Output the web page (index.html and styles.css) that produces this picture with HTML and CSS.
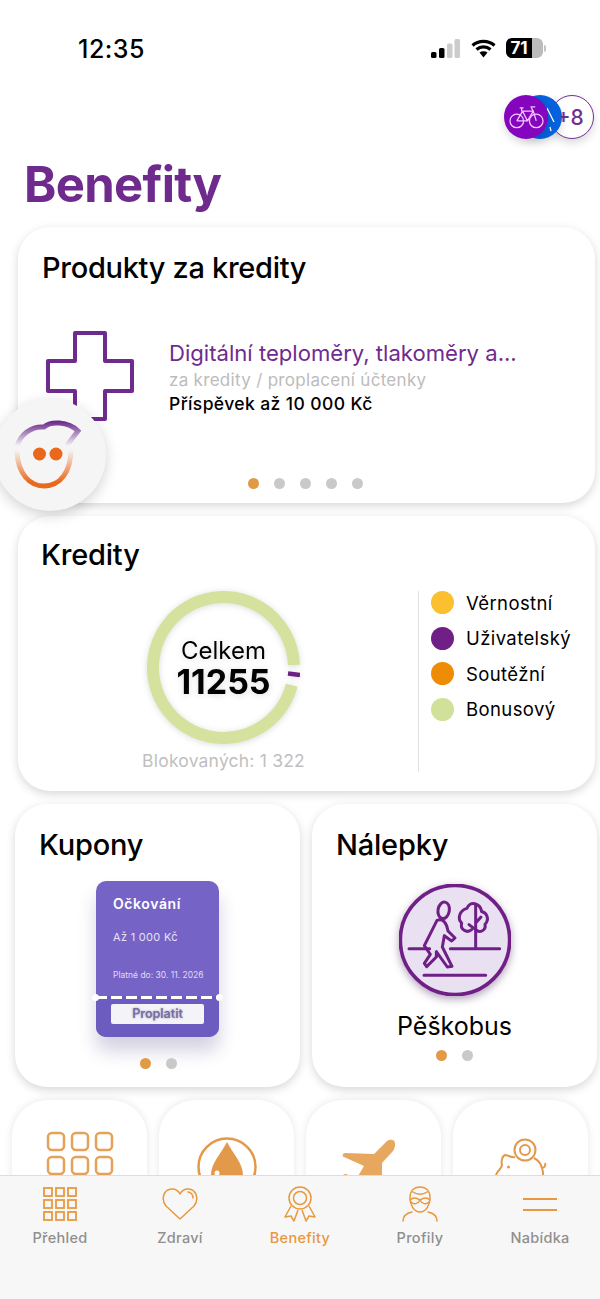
FILE: index.html
```html
<!DOCTYPE html>
<html>

<head>
    <title>Benefity</title>
    <link rel="stylesheet" href="styles.css">
</head>

<body>
    <div class="screen">
        <div class="status">
            <div class="time">12:35</div>
            <div class="status-icons">
                <svg class="signal" width="29" height="19" viewBox="0 0 29 19">
                    <rect x="0" y="13" width="5.500" height="6" rx="1.500" fill="#000" />
                    <rect x="8" y="9" width="5.500" height="10" rx="1.500" fill="#000" />
                    <rect x="16" y="4.500" width="5.500" height="14.500" rx="1.500" fill="#ccc" />
                    <rect x="23.500" y="0" width="5.500" height="19" rx="1.500" fill="#ccc" />
                </svg>
                <svg class="wifi" width="25" height="19" viewBox="0 0 25 19">
                    <path d="M1.500 6.500C7.500 1 17.500 1 23.500 6.500" fill="none" stroke="#000" stroke-width="3.200" />
                    <path d="M5.500 10.500C9.500 7 15.500 7 19.500 10.500" fill="none" stroke="#000" stroke-width="3.200" />
                    <path d="M8.500 13.500C10.800 11.800 14.200 11.800 16.500 13.500L12.500 18.500Z" fill="#000" />
                </svg>
                <div class="battery">
                    <div class="battery-level">71</div>
                </div>
                <div class="battery-nub"></div>
            </div>
        </div>

        <div class="avatars">
            <div class="avatar avatar-bike">
                <svg width="35" height="28" viewBox="0 0 36 28" fill="none" stroke="#f3c8ff" stroke-width="1.300">
                    <circle cx="8" cy="18" r="7" />
                    <circle cx="28" cy="18" r="7" />
                    <path d="M8 18L14 8H25L28 18M14 8L19 18H8M25 8L19 18M13 4.500V8M11 4.500H15M23 4.500L25 8M22 3.500H27" />
                </svg>
            </div>
            <div class="avatar avatar-blue">
                <svg class="blue-mark" width="8" height="30" viewBox="0 0 8 30" fill="none" stroke="#ffffff" stroke-width="1.300">
                    <path d="M0 6L7 20M3 25L4 29" />
                </svg>
            </div>
            <div class="avatar avatar-more">+8</div>
        </div>

        <h1 class="page-title">Benefity</h1>

        <div class="card card-products">
            <h2 class="card-title card-title-long">Produkty za kredity</h2>
            <div class="product">
                <svg class="product-icon" width="90" height="92" viewBox="0 0 90 92">
                    <path d="M30 3H60V31H87V61H60V89H30V61H3V31H30Z" fill="none" stroke="#6f2a8e" stroke-width="4" stroke-linejoin="round" />
                </svg>
                <div class="product-text">
                    <div class="product-name">Digitální teploměry, tlakoměry a...</div>
                    <div class="product-sub">za kredity / proplacení účtenky</div>
                    <div class="product-note">Příspěvek až 10 000 Kč</div>
                </div>
            </div>
            <div class="dots dots-products">
                <span class="dot dot-on"></span>
                <span class="dot"></span>
                <span class="dot"></span>
                <span class="dot"></span>
                <span class="dot"></span>
            </div>
        </div>

        <div class="card card-credits">
            <h2 class="card-title">Kredity</h2>
            <div class="credits-body">
                <div class="credits-chart">
                    <div class="ring">
                        <svg width="153" height="153" viewBox="0 0 153 153" fill="none">
                            <path d="M144.750 94.150A70.500 70.500 0 1 1 146.960 74.040" stroke="#d5e29e" stroke-width="12" />
                            <path d="M141 82.500L153 84" stroke="#6f1f86" stroke-width="4.500" />
                        </svg>
                        <div class="ring-text">
                            <div class="ring-label">Celkem</div>
                            <div class="ring-value">11255</div>
                        </div>
                    </div>
                    <div class="blocked">Blokovaných: 1 322</div>
                </div>
                <div class="legend">
                    <div class="legend-row"><span class="legend-dot legend-yellow"></span>Věrnostní</div>
                    <div class="legend-row"><span class="legend-dot legend-purple"></span>Uživatelský</div>
                    <div class="legend-row"><span class="legend-dot legend-orange"></span>Soutěžní</div>
                    <div class="legend-row"><span class="legend-dot legend-green"></span>Bonusový</div>
                </div>
            </div>
        </div>

        <div class="pair">
            <div class="card card-half">
                <h2 class="card-title">Kupony</h2>
                <div class="ticket">
                    <div class="ticket-top">
                        <div class="ticket-name">Očkování</div>
                        <div class="ticket-amount">Až 1 000 Kč</div>
                        <div class="ticket-date">Platné do: 30. 11. 2026</div>
                    </div>
                    <div class="ticket-stub">
                        <div class="ticket-button">Proplatit</div>
                    </div>
                </div>
                <div class="dots dots-coupons">
                    <span class="dot dot-on"></span>
                    <span class="dot"></span>
                </div>
            </div>
            <div class="card card-half">
                <h2 class="card-title">Nálepky</h2>
                <div class="sticker">
                    <svg width="112" height="112" viewBox="58 43 336 336" fill="none" stroke="#6f1f86" stroke-width="9" stroke-linecap="round" stroke-linejoin="round">
                        <circle cx="226" cy="211" r="164" fill="#e9e0f2" stroke-width="11" />
                        <path d="M88 237H150M212 237H360M133 317H318" />
                        <ellipse cx="192" cy="122" rx="17" ry="25" transform="rotate(10 192 122)" />
                        <path d="M172 152C190 146 200 158 205 184L226 205L216 214L194 198L188 232L217 290L203 292L170 246L170 262L141 291L134 281L152 254L134 228Z" />
                        <path d="M288 108V235M288 160L304 142M288 180L268 165" />
                        <path d="M288 180C300 192 320 182 316 164C330 150 322 128 306 126C302 100 270 92 262 116C240 122 232 146 246 160C240 180 262 192 276 180" />
                    </svg>
                </div>
                <div class="sticker-name">Pěškobus</div>
                <div class="dots dots-stickers">
                    <span class="dot dot-on"></span>
                    <span class="dot"></span>
                </div>
            </div>
        </div>

        <div class="shortcuts">
            <div class="card card-small">
                <svg class="icon-grid" width="68" height="68" viewBox="0 0 68 68" fill="none" stroke="#e6a15a" stroke-width="2.500">
                    <rect x="2" y="2" width="16" height="17" rx="4" />
                    <rect x="26" y="2" width="16" height="17" rx="4" />
                    <rect x="50" y="2" width="16" height="17" rx="4" />
                    <rect x="2" y="26" width="16" height="17" rx="4" />
                    <rect x="26" y="26" width="16" height="17" rx="4" />
                    <rect x="50" y="26" width="16" height="17" rx="4" />
                </svg>
            </div>
            <div class="card card-small">
                <svg class="icon-drop" width="62" height="62" viewBox="0 0 62 62">
                    <circle cx="31" cy="31" r="28.500" fill="none" stroke="#e3994a" stroke-width="2.500" />
                    <path d="M31 6C37 18 47 27 47 39C47 48 40 54 31 54C22 54 15 48 15 39C15 27 25 18 31 6Z" fill="#e3994a" />
                    <circle cx="21" cy="37" r="2.500" fill="#fff" />
                </svg>
            </div>
            <div class="card card-small">
                <svg class="icon-plane" width="56" height="62" viewBox="0 0 56 62">
                    <path d="M1 16C0 17 1 19 2 19L22 28L15 40H40V25L51 13C54 9 54 2 50 2C47 1 45 3 43 5L32 16L3 15Z" fill="#e8a75f" />
                    <rect x="1" y="36" width="5" height="4" rx="2" fill="#e8a75f" />
                </svg>
            </div>
            <div class="card card-small">
                <svg class="icon-piggy" width="54" height="60" viewBox="0 0 54 60" fill="none" stroke="#e3994a" stroke-width="2">
                    <circle cx="31" cy="12" r="10.500" />
                    <circle cx="31" cy="12" r="5" />
                    <path d="M40 20C44 22 47 26 48 30C50 30 52 28 51 25M48 30C50 36 49 42 46 46H6C2 42 1 38 3 35C4 32 7 32 8 27C7 24 8 18 11 17C14 17 17 20 21 19" />
                    <circle cx="14.500" cy="29" r="1.500" fill="#e3994a" stroke="none" />
                </svg>
            </div>
        </div>

        <div class="fab">
            <svg width="112" height="112" viewBox="-6 399 112 112" fill="none" stroke-width="5" stroke-linecap="round">
                <defs>
                    <linearGradient id="faceBottom" gradientUnits="userSpaceOnUse" x1="0" y1="450" x2="0" y2="482">
                        <stop offset="0" stop-color="#e9681c" stop-opacity="0" />
                        <stop offset="1" stop-color="#e9681c" />
                    </linearGradient>
                    <linearGradient id="faceTop" gradientUnits="userSpaceOnUse" x1="0" y1="422" x2="0" y2="446">
                        <stop offset="0" stop-color="#6c2d8e" />
                        <stop offset="1" stop-color="#6c2d8e" stop-opacity="0" />
                    </linearGradient>
                </defs>
                <path d="M17 452C18 474 30 486 44 486C60 486 71 472 71 449" stroke="url(#faceBottom)" />
                <path d="M17 447C20 434 32 426 44 427C50 421 68 421 78 431L68 444" stroke="url(#faceTop)" />
                <circle cx="39.500" cy="454" r="6.500" fill="#e9681c" />
                <circle cx="56" cy="454" r="6.500" fill="#e9681c" />
            </svg>
        </div>

        <div class="tabbar">
            <div class="tab">
                <svg width="34" height="34" viewBox="0 0 34 34" fill="none" stroke="#e8983e" stroke-width="1.800">
                    <rect x="1" y="1" width="8" height="8" />
                    <rect x="13" y="1" width="8" height="8" />
                    <rect x="25" y="1" width="8" height="8" />
                    <rect x="1" y="13" width="8" height="8" />
                    <rect x="13" y="13" width="8" height="8" />
                    <rect x="25" y="13" width="8" height="8" />
                    <rect x="1" y="25" width="8" height="8" />
                    <rect x="13" y="25" width="8" height="8" />
                    <rect x="25" y="25" width="8" height="8" />
                </svg>
                <div class="tab-label">Přehled</div>
            </div>
            <div class="tab">
                <svg width="36" height="34" viewBox="0 0 36 34" fill="none" stroke="#e8983e" stroke-width="1.500" stroke-linejoin="round">
                    <path d="M18 32L4 19C-1 13 1 3 9 2C13 1.500 16 3 18 7C20 3 23 1.500 27 2C35 3 37 13 32 19Z" />
                    <path d="M26 5C29 5 31 8 31 11" stroke-linecap="round" />
                </svg>
                <div class="tab-label">Zdraví</div>
            </div>
            <div class="tab">
                <svg width="34" height="36" viewBox="0 0 34 36" fill="none" stroke="#e8983e" stroke-width="1.500" stroke-linejoin="round">
                    <circle cx="17" cy="12" r="11" />
                    <circle cx="17" cy="12" r="6.500" />
                    <path d="M8 20L2 31L8 30L11 35L15 24M26 20L32 31L26 30L23 35L19 24" />
                </svg>
                <div class="tab-label tab-label-active">Benefity</div>
            </div>
            <div class="tab">
                <svg width="36" height="36" viewBox="0 0 36 36" fill="none" stroke="#e8983e" stroke-width="1.500" stroke-linecap="round">
                    <path d="M8 12C8 5 12 1 18 1C24 1 28 5 28 12C28 19 24 26 18 26C12 26 8 19 8 12Z" />
                    <path d="M8 14C11 11 15 12 18 14C21 12 25 11 28 14M9 16C12 19 16 18 18 14C20 18 24 19 27 16M11 6C15 9 21 9 25 6" />
                    <path d="M1 35C1 30 5 27 10 26M35 35C35 30 31 27 26 26" />
                </svg>
                <div class="tab-label">Profily</div>
            </div>
            <div class="tab">
                <div class="menu-icon">
                    <span class="menu-line"></span>
                    <span class="menu-line"></span>
                </div>
                <div class="tab-label">Nabídka</div>
            </div>
        </div>
    </div>
</body>

</html>
```

FILE: styles.css
```css
body {
    margin: 0;
    font-family: Inter, "Liberation Sans", sans-serif;
    color: #000000;
    background-color: #ffffff;
}

h1,
h2 {
    margin: 0;
}

.screen {
    position: relative;
    width: 600px;
    height: 1299px;
    overflow: hidden;
    background-color: #ffffff;
}

/* status bar */
.status {
    display: flex;
    justify-content: space-between;
    align-items: center;
    height: 20px;
    padding: 38px 54px 0 78px;
}

.time {
    font-size: 25px;
    font-weight: 500;
    letter-spacing: 0.5px;
    padding-top: 1px;
}

.status-icons {
    display: flex;
    align-items: center;
}

.wifi {
    margin-left: 11px;
}

.battery {
    width: 37px;
    height: 20px;
    margin-left: 10px;
    border-radius: 6px;
    background-color: #bbbbbb;
    overflow: hidden;
}

.battery-level {
    width: 26px;
    height: 20px;
    background-color: #000000;
    color: #ffffff;
    font-size: 17px;
    font-weight: 700;
    line-height: 20px;
    text-align: center;
}

.battery-nub {
    width: 2px;
    height: 7px;
    margin-left: 1px;
    border-radius: 0 2px 2px 0;
    background-color: #c4c4c4;
}

/* avatars */
.avatars {
    display: flex;
    justify-content: flex-end;
    padding: 37px 6px 0 0;
}

.avatar {
    display: flex;
    justify-content: center;
    align-items: center;
    width: 44px;
    height: 44px;
    border-radius: 50%;
    box-sizing: border-box;
    box-shadow: 0 4px 8px rgba(0, 0, 0, 0.15);
}

.avatar-bike {
    position: relative;
    z-index: 3;
    background-color: #8405bd;
}

.avatar-blue {
    position: relative;
    z-index: 2;
    margin-left: -30px;
    padding-left: 22px;
    background-color: #0661dc;
}

.avatar-more {
    margin-left: -12px;
    padding-right: 4px;
    border: 1.500px solid #70308f;
    background-color: #ffffff;
    color: #70308f;
    font-size: 21px;
    font-weight: 500;
}

.page-title {
    margin: 15px 0 0 24px;
    color: #6f2a8e;
    font-size: 49px;
    font-weight: 700;
    line-height: 62px;
    letter-spacing: -0.7px;
}

/* cards */
.card {
    background-color: #ffffff;
    border-radius: 32px;
    box-shadow: 0 3px 10px rgba(0, 0, 0, 0.16);
}

.card-title {
    font-size: 29px;
    font-weight: 500;
    line-height: 36px;
    letter-spacing: -0.2px;
}

.card-title-long {
    letter-spacing: -0.3px;
}

.card-products {
    height: 276px;
    margin: 11px 5px 0 18px;
    padding: 23px 0 0 24px;
    box-sizing: border-box;
}

.product {
    display: flex;
    align-items: flex-start;
    margin: 44px 0 0 3px;
}

.product-text {
    margin: 9px 0 0 34px;
}

.product-name {
    color: #6f2a8e;
    font-size: 22.100px;
    line-height: 28px;
    white-space: nowrap;
}

.product-sub {
    margin-top: 2px;
    color: #bcbcbc;
    font-size: 17px;
    line-height: 22px;
    letter-spacing: 0.3px;
    white-space: nowrap;
}

.product-note {
    margin-top: 2px;
    font-size: 17.500px;
    font-weight: 500;
    line-height: 22px;
    letter-spacing: 0.4px;
    white-space: nowrap;
}

.dots {
    display: flex;
    gap: 15px;
}

.dot {
    width: 11px;
    height: 11px;
    border-radius: 50%;
    background-color: #c9c9c9;
}

.dot-on {
    background-color: #e39a45;
}

.dots-products {
    margin: 56px 0 0 206px;
}

.card-credits {
    height: 275px;
    margin: 13px 5px 0 18px;
    padding: 21px 0 0 23px;
    box-sizing: border-box;
}

.credits-body {
    display: flex;
    margin-top: 18px;
}

.credits-chart {
    display: flex;
    flex-direction: column;
    align-items: center;
    width: 363px;
    margin-left: -23px;
}

.ring {
    position: relative;
    width: 153px;
    height: 153px;
    margin-left: 48px;
    filter: drop-shadow(0 1px 3px rgba(0, 0, 0, 0.14));
}

.ring-text {
    position: absolute;
    top: 45px;
    left: 0;
    width: 153px;
    text-align: center;
}

.ring-label {
    font-size: 24px;
    line-height: 29px;
}

.ring-value {
    font-size: 34px;
    font-weight: 700;
    line-height: 34px;
}

.blocked {
    margin: 6px 0 0 48px;
    color: #bfbfbf;
    font-size: 17.500px;
    line-height: 22px;
    letter-spacing: 0.2px;
    white-space: nowrap;
}

.legend {
    display: flex;
    flex-direction: column;
    gap: 12px;
    width: 176px;
    height: 181px;
    box-sizing: border-box;
    padding-left: 12px;
    border-left: 1px solid #e2e2e2;
    margin-left: 37px;
}

.legend-row {
    display: flex;
    align-items: center;
    gap: 12px;
    height: 23.500px;
    font-size: 18.500px;
    letter-spacing: 0.4px;
    white-space: nowrap;
}

.legend-dot {
    flex: none;
    width: 23px;
    height: 23px;
    border-radius: 50%;
}

.legend-yellow {
    background-color: #fbc02f;
}

.legend-purple {
    background-color: #6f1f86;
}

.legend-orange {
    background-color: #ee8c06;
}

.legend-green {
    background-color: #d2e19a;
}

.pair {
    display: flex;
    gap: 12px;
    margin: 13px 3px 0 15px;
}

.card-half {
    width: 285px;
    height: 283px;
    padding: 23px 0 0 24px;
    box-sizing: border-box;
}

/* coupon */
.ticket {
    width: 123px;
    margin: 18px 0 0 57px;
    border-radius: 10px;
    background-color: #7564c6;
    box-shadow: 0 14px 18px rgba(60, 50, 120, 0.22);
    color: #ffffff;
}

.ticket-top {
    height: 115px;
    padding: 14px 0 0 17px;
    box-sizing: border-box;
}

.ticket-name {
    font-size: 14px;
    font-weight: 600;
    line-height: 17px;
    letter-spacing: 0.6px;
}

.ticket-amount {
    margin-top: 18px;
    color: #e6e1f7;
    font-size: 11px;
    line-height: 14px;
    letter-spacing: 0.3px;
}

.ticket-date {
    margin-top: 26px;
    color: #e0dbf5;
    font-size: 8.500px;
    line-height: 11px;
    white-space: nowrap;
}

.ticket-stub {
    position: relative;
    height: 41px;
    padding-top: 8px;
    box-sizing: border-box;
    border-radius: 0 0 10px 10px;
    background-color: #6c5cc0;
    background-image: repeating-linear-gradient(90deg, #ffffff 0, #ffffff 11px, transparent 11px, transparent 15px);
    background-size: 100% 3px;
    background-repeat: no-repeat;
}

.ticket-stub::before,
.ticket-stub::after {
    content: "";
    position: absolute;
    top: -2px;
    width: 7px;
    height: 7px;
    border-radius: 50%;
    background-color: #ffffff;
}

.ticket-stub::before {
    left: -4px;
}

.ticket-stub::after {
    right: -4px;
}

.ticket-button {
    width: 93px;
    height: 20px;
    margin-left: 15px;
    border-radius: 2px;
    background-color: #f4f3f8;
    color: #77709f;
    font-size: 12.500px;
    font-weight: 600;
    line-height: 20px;
    text-align: center;
    text-shadow: 0 0 2px rgba(110, 98, 168, 0.7);
}

.dots-coupons {
    margin: 21px 0 0 101px;
}

/* sticker */
.sticker {
    width: 112px;
    height: 112px;
    margin: 21px 0 0 63px;
    filter: drop-shadow(0 3px 4px rgba(60, 20, 80, 0.4));
}

.sticker-name {
    width: 285px;
    margin: 15px 0 0 -24px;
    font-size: 25px;
    line-height: 30px;
    text-align: center;
}

.dots-stickers {
    margin: 9px 0 0 100px;
}

/* shortcuts under the tab bar */
.shortcuts {
    display: flex;
    gap: 12px;
    margin: 13px 0 0 12px;
}

.card-small {
    display: flex;
    justify-content: center;
    align-items: flex-start;
    width: 135px;
    height: 200px;
    padding-top: 30px;
    box-sizing: border-box;
    border-radius: 36px;
    box-shadow: 0 0 9px rgba(0, 0, 0, 0.10);
}

.icon-grid {
    margin-top: 1px;
}

.icon-drop {
    margin-top: 6px;
}

.icon-plane {
    margin: 8px 7px 0 0;
}

.icon-piggy {
    margin-top: 8px;
}

/* floating smiley */
.fab {
    position: absolute;
    left: -6px;
    top: 399px;
    width: 112px;
    height: 112px;
    border-radius: 50%;
    background-color: #f5f5f5;
    box-shadow: 0 4px 14px rgba(0, 0, 0, 0.18);
}

/* tab bar */
.tabbar {
    position: absolute;
    left: 0;
    bottom: 0;
    display: flex;
    width: 600px;
    height: 124px;
    padding-top: 10px;
    box-sizing: border-box;
    background-color: #f7f7f7;
    border-top: 1px solid #dddddd;
}

.tab {
    display: flex;
    flex-direction: column;
    align-items: center;
    width: 120px;
}

.tab svg,
.menu-icon {
    height: 36px;
}

.tab-label {
    margin-top: 6px;
    color: #8f8f8f;
    font-size: 14.500px;
    font-weight: 500;
    line-height: 20px;
    letter-spacing: 0.3px;
}

.tab-label-active {
    color: #e8983e;
}

.menu-icon {
    display: flex;
    flex-direction: column;
    justify-content: center;
    gap: 9px;
    width: 34px;
}

.menu-line {
    height: 2px;
    background-color: #e8983e;
}
```
